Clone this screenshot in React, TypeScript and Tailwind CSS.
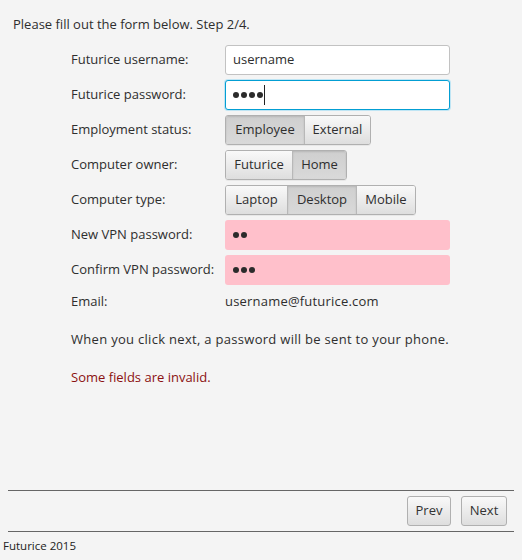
import React from 'react';

const font = { fontFamily: '"Open Sans", "Noto Sans", sans-serif' };

const Dots = ({ n }: { n: number }) => (
  <span className="flex items-center gap-[2px]">
    {Array.from({ length: n }).map((_, i) => (
      <span key={i} className="w-[6px] h-[6px] rounded-full bg-[#2b2b2b]" />
    ))}
  </span>
);

// widths measured from the picture, one class per segment
const Toggle = ({ items, widths, selected }: { items: string[]; widths: string[]; selected: number }) => (
  <div className="flex h-[30px] rounded-[3px] border border-[#b0b0b0] overflow-hidden shadow-[0_1px_0_rgba(0,0,0,0.05)]">
    {items.map((t, i) => (
      <div
        key={t}
        className={`${widths[i]} flex items-center justify-center ${i > 0 ? 'border-l border-[#b8b8b8]' : ''} ${
          i === selected
            ? 'bg-gradient-to-b from-[#cfcfcf] to-[#d9d9d9] shadow-[inset_0_1px_2px_rgba(0,0,0,0.12)]'
            : 'bg-gradient-to-b from-[#f9f9f9] to-[#dedede]'
        }`}
      >
        {t}
      </div>
    ))}
  </div>
);

const Label = ({ children }: { children: React.ReactNode }) => (
  <div className="h-[30px] flex items-center">{children}</div>
);

const Btn = ({ children, w }: { children: React.ReactNode; w: string }) => (
  <button className={`${w} h-[30px] rounded-[3px] border border-[#b0b0b0] bg-gradient-to-b from-[#f9f9f9] to-[#dedede] text-[#333]`}>
    {children}
  </button>
);

export default function App() {
  return (
    <div className="w-[522px] h-[560px] bg-[#f4f4f4] flex flex-col text-[13px] text-[#2e2e2e]" style={font}>
      <div className="pt-[14px] pl-[13px] leading-[20px]">Please fill out the form below. Step 2/4.</div>

      <div className="pl-[71px] pt-[11px] grid grid-cols-[154px_225px] gap-y-[5px]">
        <Label>Futurice username:</Label>
        <div className="h-[30px] bg-white border border-[#c2c2c2] rounded-[3px] flex items-center px-[7px]">username</div>

        <Label>Futurice password:</Label>
        <div className="h-[30px] bg-white border border-[#039ed3] rounded-[3px] shadow-[0_0_0_1px_#bfe5f4] flex items-center px-[7px]">
          <Dots n={4} />
          <span className="w-px h-[20px] bg-[#222] ml-[1px]" />
        </div>

        <Label>Employment status:</Label>
        <div className="flex">
          <Toggle items={['Employee', 'External']} widths={['w-[78px]', 'w-[66px]']} selected={0} />
        </div>

        <Label>Computer owner:</Label>
        <div className="flex">
          <Toggle items={['Futurice', 'Home']} widths={['w-[66px]', 'w-[54px]']} selected={1} />
        </div>

        <Label>Computer type:</Label>
        <div className="flex">
          <Toggle items={['Laptop', 'Desktop', 'Mobile']} widths={['w-[61px]', 'w-[69px]', 'w-[59px]']} selected={1} />
        </div>

        <Label>New VPN password:</Label>
        <div className="h-[30px] bg-[#ffc0cb] rounded-[3px] flex items-center px-[8px]">
          <Dots n={2} />
        </div>

        <Label>Confirm VPN password:</Label>
        <div className="h-[30px] bg-[#ffc0cb] rounded-[3px] flex items-center px-[8px]">
          <Dots n={3} />
        </div>

        <div className="h-[24px] flex items-center">Email:</div>
        <div className="h-[24px] flex items-center tracking-[0.2px]">username@futurice.com</div>
      </div>

      <div className="pl-[71px] pt-[15px] leading-[20px] tracking-[0.3px]">
        When you click next, a password will be sent to your phone.
      </div>
      <div className="pl-[71px] pt-[18px] leading-[20px] text-[#8b1010]">Some fields are invalid.</div>

      <div className="flex-1" />

      <div className="mx-[8px] border-t border-[#666]" />
      <div className="flex justify-end gap-[10px] pr-[15px] py-[5px]">
        <Btn w="w-[44px]">Prev</Btn>
        <Btn w="w-[46px]">Next</Btn>
      </div>
      <div className="mx-[8px] border-t border-[#666]" />
      <div className="h-[28px] flex items-center pl-[3px] text-[11.5px] text-[#222]">Futurice 2015</div>
    </div>
  );
}
